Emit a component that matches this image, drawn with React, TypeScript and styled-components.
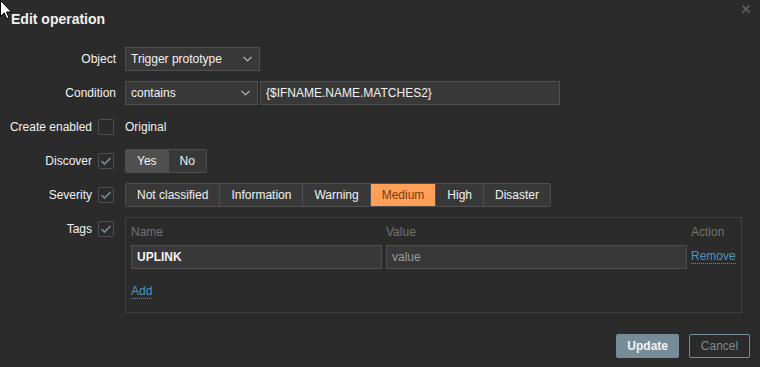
import React, { useState } from 'react';
import styled, { createGlobalStyle } from 'styled-components';

const GlobalStyle = createGlobalStyle`
  html, body {
    margin: 0;
    padding: 0;
    background: #2b2b2b;
  }
  body {
    font-family: "Liberation Sans", Arial, sans-serif;
    font-size: 12px;
    color: #f2f2f2;
  }
`;

const SEVERITIES = ['Not classified', 'Information', 'Warning', 'Medium', 'High', 'Disaster'];

export default function App() {
  const [discover, setDiscover] = useState('Yes');
  const [severity, setSeverity] = useState('Medium');

  return (
    <>
      <GlobalStyle />
      <Dialog>
        <Cursor width="12" height="20" viewBox="0 0 12 20">
          <path d="M0.5 0.5 L0.5 16.5 L4.2 12.8 L6.8 18.8 L9 17.8 L6.5 12 L11.5 12 Z" fill="#fff" stroke="#000" strokeWidth="1" />
        </Cursor>
        <Close viewBox="0 0 10 10" width="10" height="10">
          <path d="M1.5 1.5 L8.5 8.5 M8.5 1.5 L1.5 8.5" stroke="#5a5a5a" strokeWidth="2" />
        </Close>

        <Title>Edit operation</Title>

        <Form>
          <Label>Object</Label>
          <Controls>
            <Select width={135}>
              Trigger prototype
              <Chevron />
            </Select>
          </Controls>

          <Label>Condition</Label>
          <Controls>
            <Select width={133}>
              contains
              <Chevron />
            </Select>
            <Input width={300}>{'{$IFNAME.NAME.MATCHES2}'}</Input>
          </Controls>

          <Label withBox>
            Create enabled
            <Checkbox />
          </Label>
          <Controls>
            <PlainText>Original</PlainText>
          </Controls>

          <Label withBox>
            Discover
            <Checkbox checked />
          </Label>
          <Controls>
            <Segmented>
              {['Yes', 'No'].map((v) => (
                <Segment key={v} active={discover === v} onClick={() => setDiscover(v)}>
                  {v}
                </Segment>
              ))}
            </Segmented>
          </Controls>

          <Label withBox>
            Severity
            <Checkbox checked />
          </Label>
          <Controls>
            <Segmented>
              {SEVERITIES.map((v) => (
                <Segment
                  key={v}
                  active={severity === v}
                  tone={v === 'Medium' ? 'medium' : undefined}
                  onClick={() => setSeverity(v)}
                >
                  {v}
                </Segment>
              ))}
            </Segmented>
          </Controls>

          <Label withBox>
            Tags
            <Checkbox checked />
          </Label>
          <TagBox>
            <TagGrid>
              <ColHead>Name</ColHead>
              <ColHead>Value</ColHead>
              <ColHead>Action</ColHead>
              <Input strong>UPLINK</Input>
              <Input muted>value</Input>
              <Link>Remove</Link>
            </TagGrid>
            <AddRow>
              <Link>Add</Link>
            </AddRow>
          </TagBox>
        </Form>

        <Footer>
          <Button primary>Update</Button>
          <Button>Cancel</Button>
        </Footer>
      </Dialog>
    </>
  );
}

function Chevron() {
  return (
    <ChevronSvg width="9" height="6" viewBox="0 0 9 6">
      <path d="M0.5 0.8 L4.5 4.8 L8.5 0.8" fill="none" stroke="#c8c8c8" strokeWidth="1.1" />
    </ChevronSvg>
  );
}

function Checkbox({ checked }: { checked?: boolean }) {
  return (
    <Box>
      {checked && (
        <svg width="12" height="10" viewBox="0 0 12 10">
          <path d="M1.5 5 L4.5 8 L10.5 2" fill="none" stroke="#768d99" strokeWidth="1.6" />
        </svg>
      )}
    </Box>
  );
}

const Dialog = styled.div`
  position: relative;
  width: 760px;
  height: 367px;
  box-sizing: border-box;
  background: #2b2b2b;
  overflow: hidden;
`;

const Cursor = styled.svg`
  position: absolute;
  left: 0;
  top: 0;
  z-index: 2;
`;

const Close = styled.svg`
  position: absolute;
  right: 9px;
  top: 4px;
`;

const Title = styled.h4`
  margin: 0;
  padding: 11px 0 0 11px;
  height: 47px;
  box-sizing: border-box;
  font-size: 14px;
  font-weight: bold;
  line-height: 17px;
  color: #f2f2f2;
`;

const Form = styled.div`
  display: grid;
  grid-template-columns: 116px 1fr;
  column-gap: 9px;
  row-gap: 10px;
  padding-right: 19px;
`;

const Label = styled.div<{ withBox?: boolean }>`
  display: flex;
  align-items: center;
  justify-content: flex-end;
  gap: 6px;
  height: 24px;
  margin-left: -10px;
  margin-right: ${(p) => (p.withBox ? '2px' : '0')};
  align-self: start;
  color: #f2f2f2;
  white-space: nowrap;
`;

const Controls = styled.div`
  display: flex;
  align-items: center;
  gap: 2px;
  min-height: 24px;
`;

const Select = styled.div<{ width: number }>`
  display: flex;
  align-items: center;
  justify-content: space-between;
  width: ${(p) => p.width}px;
  height: 24px;
  box-sizing: border-box;
  padding: 0 7px 0 5px;
  background: #383838;
  border: 1px solid #4f4f4f;
  color: #f2f2f2;
`;

const ChevronSvg = styled.svg`
  display: block;
`;

const Input = styled.div<{ width?: number; muted?: boolean; strong?: boolean }>`
  display: flex;
  align-items: center;
  width: ${(p) => (p.width ? `${p.width}px` : 'auto')};
  height: 24px;
  box-sizing: border-box;
  padding: 0 5px;
  background: #383838;
  border: 1px solid #4f4f4f;
  color: ${(p) => (p.muted ? '#9a9a9a' : '#f2f2f2')};
  font-weight: ${(p) => (p.strong ? 'bold' : 'normal')};
`;

const PlainText = styled.span`
  color: #f2f2f2;
`;

const Box = styled.span`
  display: inline-flex;
  align-items: center;
  justify-content: center;
  width: 16px;
  height: 16px;
  box-sizing: border-box;
  border: 1px solid #4f4f4f;
  border-radius: 2px;
  background: #2b2b2b;
`;

const Segmented = styled.div`
  display: flex;
  height: 24px;
  box-sizing: border-box;
  border: 1px solid #4f4f4f;
  border-radius: 2px;
  overflow: hidden;
`;

const Segment = styled.div<{ active?: boolean; tone?: 'medium' }>`
  display: flex;
  align-items: center;
  padding: 0 11px;
  background: ${(p) => (p.active ? (p.tone === 'medium' ? '#ffa059' : '#4f4f4f') : '#383838')};
  color: ${(p) => (p.active && p.tone === 'medium' ? '#7a3a0d' : '#f2f2f2')};
  cursor: pointer;
  & + & {
    border-left: 1px solid #4f4f4f;
  }
`;

const TagBox = styled.div`
  border: 1px solid #3f3f3f;
  padding: 6px 5px 13px 5px;
`;

const TagGrid = styled.div`
  display: grid;
  grid-template-columns: 251px 301px auto;
  column-gap: 4px;
  row-gap: 5px;
  align-items: center;
`;

const ColHead = styled.div`
  color: #737373;
  line-height: 16px;
`;

const Link = styled.span`
  justify-self: start;
  color: #4796c4;
  border-bottom: 1px dotted #4796c4;
  line-height: 13px;
  cursor: pointer;
`;

const AddRow = styled.div`
  display: flex;
  margin-top: 16px;
  line-height: 18px;
`;

const Footer = styled.div`
  display: flex;
  justify-content: flex-end;
  gap: 10px;
  padding: 21px 10px 0 0;
`;

const Button = styled.button<{ primary?: boolean }>`
  height: 24px;
  min-width: 61px;
  padding: 0 10px;
  box-sizing: border-box;
  border-radius: 2px;
  font-family: inherit;
  font-size: 12px;
  border: 1px solid #768d99;
  background: ${(p) => (p.primary ? '#768d99' : 'transparent')};
  color: ${(p) => (p.primary ? '#f2f2f2' : '#768d99')};
  font-weight: ${(p) => (p.primary ? 'bold' : 'normal')};
`;
